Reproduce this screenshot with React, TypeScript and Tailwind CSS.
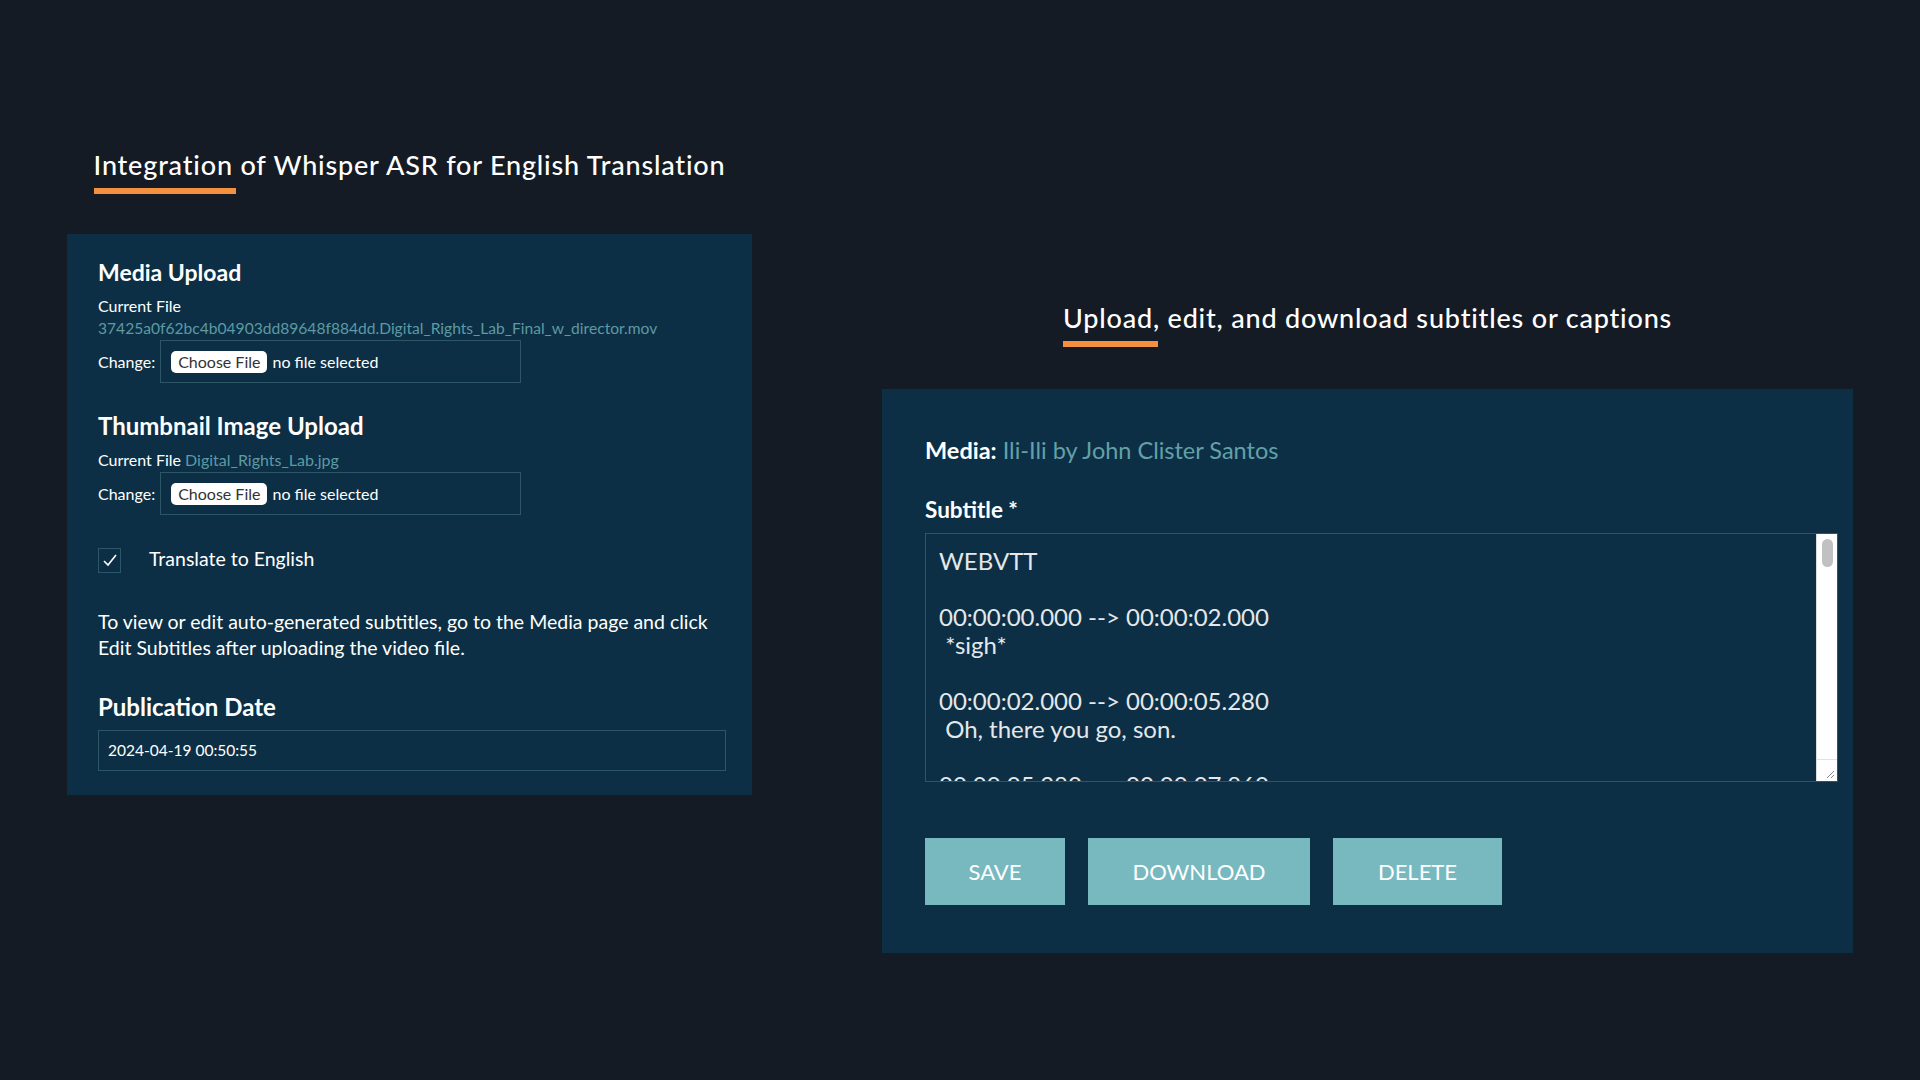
const subtitleText = `WEBVTT

00:00:00.000 --> 00:00:02.000
 *sigh*

00:00:02.000 --> 00:00:05.280
 Oh, there you go, son.

00:00:05.280 --> 00:00:07.860`;

const SectionTitle = ({ children, bar }: { children: string; bar: string }) => (
    <div className="flex justify-center">
        <div className="flex flex-col items-start">
            <h2 className="text-[27px] leading-[34px] tracking-[0.03em] text-white font-medium">
                {children}
            </h2>
            <div className={bar} />
        </div>
    </div>
);

const FileInput = () => (
    <div className="flex items-center">
        <span className="text-[16px] text-white mr-[5px]">Change:</span>
        <div className="w-[361px] h-[43px] border border-[#2d5669] flex items-center pl-[10px]">
            <span className="bg-white text-[#333] text-[16px] leading-[22px] px-[7px] rounded-[5px]">
                Choose File
            </span>
            <span className="text-[16px] text-white ml-[5px]">no file selected</span>
        </div>
    </div>
);

const App = () => {
    return (
        <div
            className="min-h-[1080px] w-full bg-[#141b24] text-white"
            style={{ fontFamily: "Lato, 'Noto Sans', sans-serif" }}
        >
            <div className="flex items-start pl-[67px] pt-[148px] gap-[130px]">
                {/* left column */}
                <div className="w-[685px] flex flex-col">
                    <SectionTitle bar="w-[142px] h-[6px] bg-[#f4913f] mt-[6px]">
                        Integration of Whisper ASR for English Translation
                    </SectionTitle>

                    <div className="mt-[40px] bg-[#0c2f45] pl-[31px] pr-[26px] pt-[23px] pb-[24px]">
                        <h3 className="text-[23px] leading-[30px] font-bold">Media Upload</h3>
                        <p className="text-[16px] leading-[20px] mt-[9px]">Current File</p>
                        <p className="text-[15.6px] leading-[20px] mt-[2px] text-[#5d9aa3]">
                            37425a0f62bc4b04903dd89648f884dd.Digital_Rights_Lab_Final_w_director.mov
                        </p>
                        <div className="mt-[2px]">
                            <FileInput />
                        </div>

                        <h3 className="text-[24px] leading-[30px] font-bold mt-[28px]">Thumbnail Image Upload</h3>
                        <p className="text-[16px] leading-[20px] mt-[9px]">
                            Current File <span className="text-[#5d9aa3]">Digital_Rights_Lab.jpg</span>
                        </p>
                        <div className="mt-[2px]">
                            <FileInput />
                        </div>

                        <div className="flex items-center mt-[32px] h-[26px]">
                            <div className="w-[23px] h-[25px] border border-[#2d5669] flex items-center justify-center">
                                <svg width="16" height="14" viewBox="0 0 16 14" fill="none">
                                    <path d="M2 8 L6 12 L14 2" stroke="white" strokeWidth="1.6" />
                                </svg>
                            </div>
                            <span className="ml-[28px] text-[19.5px] -mt-[2px]">Translate to English</span>
                        </div>

                        <p className="mt-[36px] text-[19.5px] leading-[26px]">
                            To view or edit auto-generated subtitles, go to the Media page and click
                            <br />
                            Edit Subtitles after uploading the video file.
                        </p>

                        <h3 className="text-[24px] leading-[30px] font-bold mt-[31px]">Publication Date</h3>
                        <div className="mt-[8px] h-[41px] w-[628px] border border-[#2d5669] flex items-center px-[9px] text-[15.5px]">
                            2024-04-19 00:50:55
                        </div>
                    </div>
                </div>

                {/* right column */}
                <div className="w-[971px] flex flex-col mt-[153px]">
                    <SectionTitle bar="w-[95px] h-[6px] bg-[#f4913f] mt-[6px]">
                        Upload, edit, and download subtitles or captions
                    </SectionTitle>

                    <div className="mt-[42px] bg-[#0c2f45] pl-[43px] pt-[47px] pb-[48px]">
                        <p className="text-[23.5px] leading-[28px]">
                            <span className="font-bold">Media:</span>{" "}
                            <span className="text-[#63a0a8]">Ili-Ili by John Clister Santos</span>
                        </p>
                        <p className="text-[22.5px] leading-[28px] font-bold mt-[32px]">Subtitle *</p>

                        <div className="mt-[9px] w-[913px] h-[249px] border border-[#2d5669] flex">
                            <div className="flex-1 overflow-hidden pl-[13px] pt-[13px] text-[24px] leading-[28px] text-[#e4e8ea] whitespace-pre">
                                {subtitleText}
                            </div>
                            <div className="w-[21px] bg-white flex flex-col border-l border-[#dcdcdc]">
                                <div className="flex-1 pt-[5px] flex justify-center">
                                    <div className="w-[11px] h-[28px] rounded-full bg-[#c1c1c1]" />
                                </div>
                                <div className="h-[22px] border-t border-[#e2e2e2] flex items-end justify-end p-[2px]">
                                    <svg width="10" height="10" viewBox="0 0 10 10">
                                        <path d="M9 2 L2 9 M9 6 L6 9" stroke="#888" strokeWidth="1" />
                                    </svg>
                                </div>
                            </div>
                        </div>

                        <div className="flex gap-[23px] mt-[56px]">
                            <button className="h-[67px] w-[140px] bg-[#78b9bf] text-white text-[22px] uppercase">
                                Save
                            </button>
                            <button className="h-[67px] w-[222px] bg-[#78b9bf] text-white text-[22px] uppercase">
                                Download
                            </button>
                            <button className="h-[67px] w-[169px] bg-[#78b9bf] text-white text-[22px] uppercase">
                                Delete
                            </button>
                        </div>
                    </div>
                </div>
            </div>
        </div>
    );
};

export default App;
